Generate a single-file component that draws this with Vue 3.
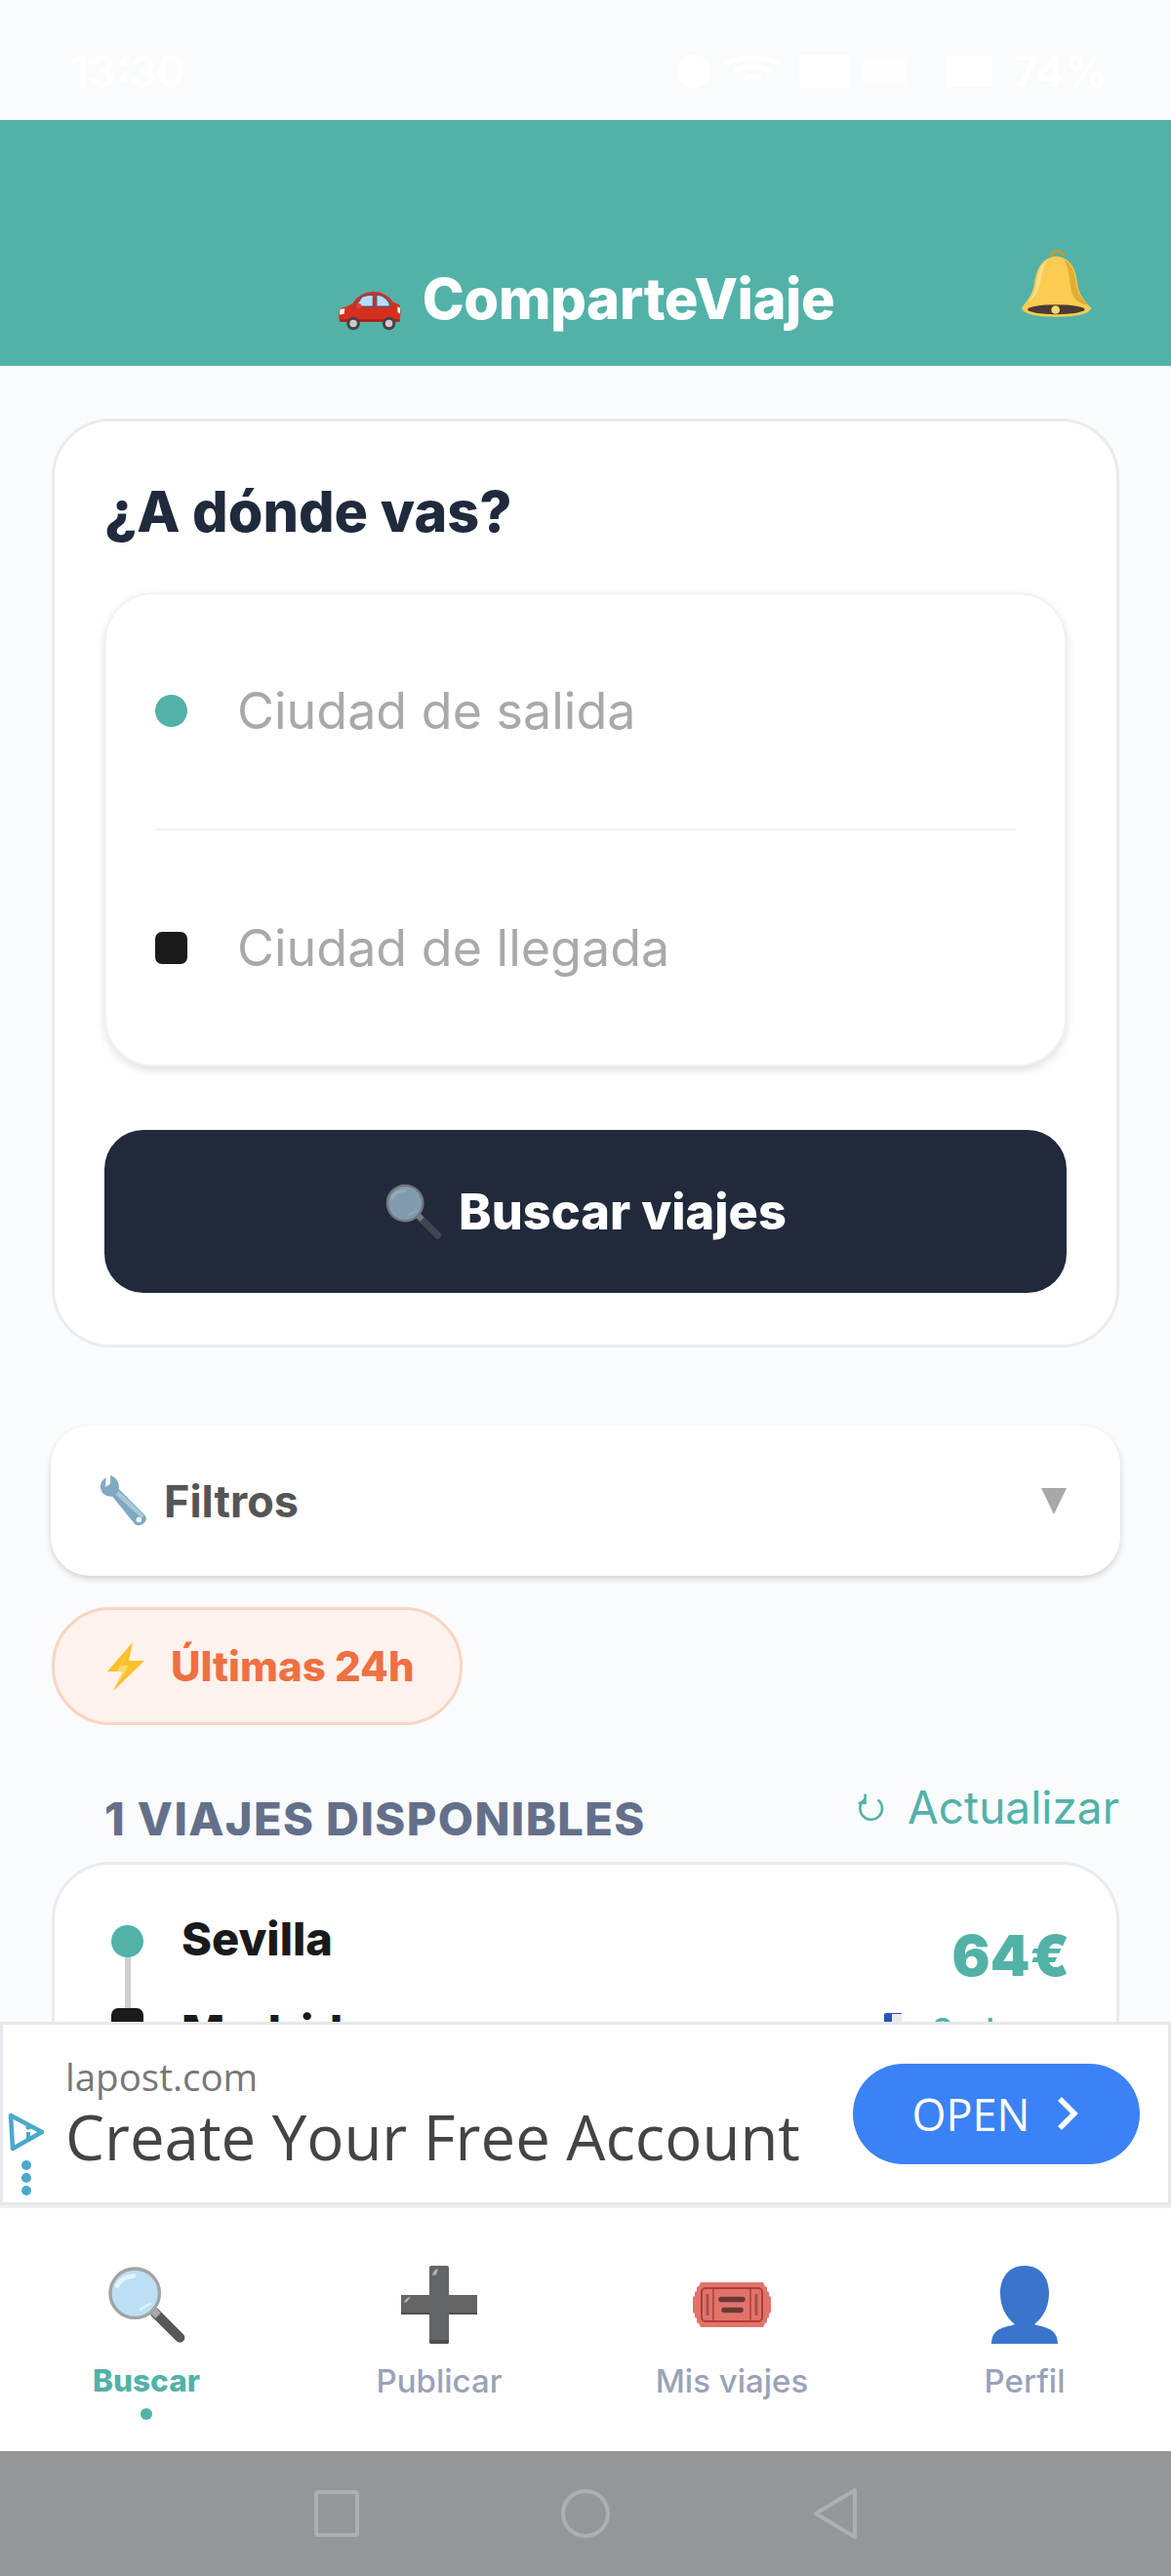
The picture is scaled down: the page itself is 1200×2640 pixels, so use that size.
<template>
  <div class="phone">
    <!-- barra de estado, casi invisible sobre el fondo claro -->
    <div class="status">
      <span class="clock">13:30</span>
      <div class="status-right">
        <svg width="235" height="40" viewBox="0 0 235 40">
          <circle cx="17" cy="20" r="17" fill="#fff" />
          <path d="M50 12q27-12 54 0M58 20q19-9 38 0M68 28q9-5 18 0" stroke="#fff" stroke-width="5" fill="none" />
          <rect x="125" y="3" width="52" height="34" rx="4" fill="#fff" />
          <rect x="190" y="6" width="45" height="28" fill="#fff" opacity=".6" />
        </svg>
        <svg class="st-batt" width="48" height="32" viewBox="0 0 48 32"><rect width="48" height="32" rx="3" fill="#fff" /></svg>
        <span class="batt">74%</span>
      </div>
    </div>

    <header class="app-header">
      <div></div>
      <h1 class="brand">
        <svg class="car" viewBox="50 170 200 130" width="68" height="44">
          <path d="M98 214Q118 180 160 178Q200 178 220 210L240 218Q246 242 240 268L60 270Q50 246 62 228Q84 224 98 214Z" fill="#d52f1f" />
          <path d="M60 262H240V270H60Z" fill="#a82216" />
          <path d="M106 224L126 194Q142 188 160 188V224ZM170 188Q192 188 208 210L212 224H170Z" fill="#b9dcf5" stroke="#5d5470" stroke-width="4" />
          <circle cx="117" cy="222" r="8" fill="#e8402c" />
          <path d="M60 232L74 230L72 246L58 248Z" fill="#fff" />
          <path d="M234 224L242 228L241 246L234 240Z" fill="#fff" />
          <circle cx="100" cy="275" r="20" fill="#4a4043" />
          <circle cx="100" cy="275" r="11" fill="#d0cccc" />
          <circle cx="208" cy="275" r="20" fill="#4a4043" />
          <circle cx="208" cy="275" r="11" fill="#d0cccc" />
        </svg>
        <span>ComparteViaje</span>
      </h1>
      <div class="bell-wrap">
        <svg viewBox="45 40 225 215" width="75" height="72">
          <path d="M140 66Q142 50 160 50Q178 50 180 66" stroke="#c49a30" stroke-width="9" fill="none" />
          <path d="M157 65C110 70 95 110 90 150C85 185 65 205 50 225Q60 252 157 252Q255 252 265 225C245 205 228 185 222 150C218 110 205 70 157 65Z" fill="#fbcb52" />
          <path d="M178 72C205 85 215 120 218 150C222 180 240 200 255 216C225 210 205 200 200 150C197 115 190 90 178 72Z" fill="#e3ac33" />
          <path d="M130 78C108 90 100 125 96 150C92 180 80 195 70 208C95 190 106 165 110 135C113 112 120 92 130 78Z" fill="#fde08e" />
          <ellipse cx="157" cy="229" rx="88" ry="15" fill="#4b3a32" />
          <circle cx="155" cy="230" r="13" fill="#f8d774" />
        </svg>
      </div>
    </header>

    <main class="content">
      <section class="search-card">
        <h2 class="search-title">¿A dónde vas?</h2>
        <div class="route-box">
          <div class="route-row with-line">
            <span class="dot"></span>
            <span class="placeholder">Ciudad de salida</span>
          </div>
          <div class="route-row">
            <span class="square"></span>
            <span class="placeholder">Ciudad de llegada</span>
          </div>
        </div>
        <button class="search-btn">
          <svg class="btn-mag" viewBox="85 60 250 250" width="60" height="60">
            <use href="#mag" />
          </svg>
          <span>Buscar viajes</span>
        </button>
      </section>

      <div class="filters">
        <div class="filters-left">
          <svg viewBox="0 0 50 50" width="54" height="54">
            <path d="M10 3C4 6 3 13 7 18C10 21 14 21 16 21L37 47C40 50 45 48 47 45C49 42 48 40 46 38L22 14C23 9 20 3 14 1L14 9L9 12Z" fill="#7fa9c0" />
            <path d="M22 16L46 39L44 42L19 19Z" fill="#a9c9da" />
            <circle cx="41" cy="43" r="2.5" fill="#fff" />
          </svg>
          <span>Filtros</span>
        </div>
        <svg viewBox="0 0 26 27" width="26" height="27"><path d="M0 0H26L13 27Z" fill="#a8a8a8" /></svg>
      </div>

      <button class="chip">
        <svg viewBox="0 0 42 50" width="42" height="50">
          <path d="M28 0L2 30H18L8 50L40 19H24Z" fill="#fbc02d" />
          <path d="M28 0L12 30H18L8 50L24 24H16Z" fill="#fdd96a" />
        </svg>
        <span>Últimas 24h</span>
      </button>

      <div class="section-head">
        <span class="section-title">1 VIAJES DISPONIBLES</span>
        <button class="refresh">
          <svg viewBox="0 0 26 26" width="28" height="28">
            <path d="M8 5.5A10.5 10.5 0 1 0 20 6" stroke="#52b2a8" stroke-width="2.4" fill="none" />
            <path d="M8 0.5V9H1.5" stroke="#52b2a8" stroke-width="2.4" fill="none" />
          </svg>
          <span>Actualizar</span>
        </button>
      </div>

      <article class="trip-card">
        <div class="trip-route">
          <div class="timeline">
            <span class="dot"></span>
            <span class="line"></span>
            <span class="square"></span>
          </div>
          <div class="cities">
            <div class="city">Sevilla</div>
            <div class="city">Madrid</div>
          </div>
        </div>
        <div class="trip-side">
          <div class="price">64€</div>
          <div class="seats">
            <svg viewBox="0 0 18 30" width="18" height="30"><path d="M0 2Q0 0 3 0H18V10H10V30H0Z" fill="#2a53b5" /><rect x="8" y="1" width="10" height="8" fill="#e6ebf2" /></svg>
            <span>2 plazas</span>
          </div>
        </div>
      </article>
    </main>

    <aside class="ad">
      <div class="ad-marks">
        <svg viewBox="0 0 38 40" width="38" height="40">
          <path d="M3 3L35 20L5 37Z" stroke="#4aa9cc" stroke-width="4.5" stroke-linejoin="round" fill="none" />
          <circle cx="21" cy="15" r="2.6" fill="#4aa9cc" />
          <path d="M21 20V30" stroke="#4aa9cc" stroke-width="4" />
        </svg>
        <span class="ad-dot"></span>
        <span class="ad-dot"></span>
        <span class="ad-dot"></span>
      </div>
      <div class="ad-text">
        <div class="ad-domain">lapost.com</div>
        <div class="ad-headline">Create Your Free Account</div>
      </div>
      <button class="ad-btn">
        <span>OPEN</span>
        <svg viewBox="0 0 26 36" width="26" height="36"><path d="M5 3L20 18L5 33" stroke="#fff" stroke-width="5.5" fill="none" /></svg>
      </button>
    </aside>

    <nav class="tabbar">
      <div v-for="tab in tabs" :key="tab.label" class="tab" :class="{ active: tab.active }">
        <div class="tab-icon">
          <svg v-if="tab.icon === 'search'" viewBox="85 60 250 250" width="83" height="83">
            <defs>
              <g id="mag">
                <path d="M235 208L312 285" stroke="#58585b" stroke-width="30" stroke-linecap="round" />
                <path d="M225 197L245 217" stroke="#a9a9a9" stroke-width="24" />
                <circle cx="173" cy="148" r="76" fill="#bcdff6" stroke="#a3a3a3" stroke-width="10" />
                <path d="M118 125Q135 95 170 95" stroke="#e4f3fc" stroke-width="14" fill="none" stroke-linecap="round" />
                <path d="M190 198L220 180" stroke="#dff0fb" stroke-width="8" stroke-linecap="round" />
              </g>
            </defs>
            <use href="#mag" />
          </svg>
          <svg v-else-if="tab.icon === 'plus'" viewBox="0 0 78 80" width="78" height="80">
            <path d="M29 2Q29 0 31 0H47Q49 0 49 2V30H78V50H49V78Q49 80 47 80H31Q29 80 29 78V50H0V30H29Z" fill="#636466" />
            <path d="M0 48H29V50H0ZM49 48H78V50H49ZM29 76H49V78Q49 80 47 80H31Q29 80 29 78Z" fill="#4e4f50" />
            <path d="M32 10Q33 4 38 3L36 9ZM3 38Q4 33 10 32L6 37Z" fill="#b5b5b7" />
          </svg>
          <svg v-else-if="tab.icon === 'ticket'" viewBox="0 0 80 46" width="80" height="46">
            <path d="M8 0H72L74 4L76 5V9L78 10V14L80 15V31L78 32V36L76 37V41L74 42L72 46H8L6 42L4 41V37L2 36V32L0 31V15L2 14V10L4 9V5L6 4Z" fill="#e2736a" />
            <rect x="9" y="6" width="62" height="34" rx="4" fill="none" stroke="#b13d37" stroke-width="2" />
            <path d="M21 6V40M59 6V40" stroke="#b13d37" stroke-width="1.5" />
            <path d="M15 12V34M65 12V34" stroke="#a4524c" stroke-width="3" />
            <path d="M29 17.5H51M32 28.5H49" stroke="#693a34" stroke-width="5.5" stroke-linecap="round" />
          </svg>
          <svg v-else viewBox="0 0 68 80" width="68" height="80">
            <path d="M34 0C15 0 9 16 9 28C9 42 15 53 24 60C18 63 0 62 0 80H68C68 62 50 63 44 60C53 53 59 42 59 28C59 16 53 0 34 0Z" fill="#3a74cb" />
          </svg>
        </div>
        <span class="tab-label">{{ tab.label }}</span>
        <span v-if="tab.active" class="tab-dot"></span>
      </div>
    </nav>

    <div class="sysnav">
      <svg viewBox="0 0 50 56" width="50" height="56"><rect x="4" y="6" width="42" height="44" rx="2" fill="none" stroke="#aeafb1" stroke-width="4" /></svg>
      <svg viewBox="0 0 50 56" width="50" height="56"><circle cx="25" cy="28" r="23" fill="none" stroke="#aeafb1" stroke-width="4" /></svg>
      <svg viewBox="0 0 50 56" width="50" height="56"><path d="M46 4V52L6 28Z" fill="none" stroke="#aeafb1" stroke-width="4" stroke-linejoin="round" /></svg>
    </div>
  </div>
</template>

<script setup>
const tabs = [
  { label: 'Buscar', icon: 'search', active: true },
  { label: 'Publicar', icon: 'plus', active: false },
  { label: 'Mis viajes', icon: 'ticket', active: false },
  { label: 'Perfil', icon: 'person', active: false }
]
</script>

<style scoped>
.phone {
  width: 1200px;
  height: 2640px;
  display: flex;
  flex-direction: column;
  overflow: hidden;
  background: #f9fbfd;
  font-family: 'Inter', 'Liberation Sans', sans-serif;
}

.status {
  height: 123px;
  flex: none;
  display: flex;
  justify-content: space-between;
  align-items: center;
  padding: 22px 65px 0 72px;
  color: #fff;
  font-size: 44px;
  font-weight: 600;
  box-sizing: border-box;
}

.status-right {
  display: flex;
  align-items: center;
}

.st-batt {
  margin: 0 22px 0 40px;
}

.app-header {
  height: 252px;
  flex: none;
  background: #52b2a8;
  display: grid;
  grid-template-columns: 1fr auto 1fr;
  align-items: end;
  box-sizing: border-box;
  padding-bottom: 34px;
}

.brand {
  margin: 0;
  display: flex;
  align-items: center;
  gap: 20px;
  color: #fff;
  font-size: 58px;
  font-weight: 800;
  line-height: 70px;
  letter-spacing: -0.5px;
}

.car {
  margin-top: 24px;
}

.bell-wrap {
  justify-self: end;
  padding: 0 80px 15px 0;
  line-height: 0;
}

.content {
  flex: 1;
  min-height: 0;
  overflow: hidden;
  padding: 54px 53px 0;
}

.search-card {
  background: #fff;
  border: 3px solid #e8ecf1;
  border-radius: 60px;
  padding: 58px 51px 53px;
}

.search-title {
  margin: 0 0 49px;
  font-size: 57.5px;
  line-height: 68px;
  font-weight: 800;
  color: #1f2a3d;
}

.route-box {
  border: 2px solid #f1f2f4;
  border-radius: 50px;
  padding: 0 50px;
  background: #fff;
  box-shadow: 0 4px 10px rgba(0, 0, 0, 0.12);
}

.route-row {
  height: 240px;
  display: flex;
  align-items: center;
  gap: 51px;
}

.route-row.with-line {
  height: 238px;
  padding-bottom: 2px;
  border-bottom: 2px solid #f0f1f3;
}

.dot {
  width: 33px;
  height: 33px;
  border-radius: 50%;
  background: #52b2a8;
  flex: none;
}

.square {
  width: 33px;
  height: 33px;
  border-radius: 7px;
  background: #1a1a1a;
  flex: none;
}

.placeholder {
  font-size: 52px;
  color: #a9a9a9;
}

.search-btn {
  margin-top: 65px;
  width: 100%;
  height: 167px;
  border: none;
  border-radius: 40px;
  background: #212a3b;
  color: #fff;
  font-family: inherit;
  font-size: 50.5px;
  font-weight: 800;
  display: flex;
  align-items: center;
  justify-content: center;
  gap: 16px;
}

.btn-mag {
  opacity: 0.62;
}

.filters {
  margin: 80px -1px 0;
  height: 154px;
  background: #fff;
  border-radius: 40px;
  box-shadow: 0 3px 6px rgba(0, 0, 0, 0.16);
  display: flex;
  align-items: center;
  justify-content: space-between;
  padding: 0 55px 0 46px;
}

.filters-left {
  display: flex;
  align-items: center;
  gap: 16px;
  font-size: 45px;
  font-weight: 700;
  color: #555;
}

.chip {
  margin-top: 32px;
  width: 421px;
  height: 121px;
  box-sizing: border-box;
  border: 3px solid #f8d5c2;
  border-radius: 60px;
  background: #fdf2ed;
  color: #ee7043;
  font-family: inherit;
  font-size: 42px;
  font-weight: 800;
  display: flex;
  align-items: center;
  padding: 0 0 0 52px;
  gap: 25px;
}

.section-head {
  margin-top: 50px;
  height: 80px;
  margin-bottom: 10px;
  display: flex;
  justify-content: space-between;
  align-items: flex-start;
  padding-left: 54px;
}

.section-title {
  margin-top: 12px;
  line-height: 68px;
  font-size: 47px;
  font-weight: 800;
  letter-spacing: 1.4px;
  color: #64708a;
}

.refresh {
  border: none;
  background: none;
  padding: 0;
  height: 68px;
  display: flex;
  align-items: center;
  gap: 24px;
  font-family: inherit;
  font-size: 46px;
  color: #52b2a8;
}

.trip-card {
  background: #fff;
  border: 3px solid #e8ecf1;
  border-radius: 60px;
  padding: 54px 48px 60px 58px;
  display: flex;
  justify-content: space-between;
}

.trip-route {
  display: flex;
  gap: 39px;
}

.timeline {
  display: flex;
  flex-direction: column;
  align-items: center;
  padding-top: 8px;
}

.line {
  width: 6px;
  height: 52px;
  background: #cfcfcf;
}

.cities {
  display: flex;
  flex-direction: column;
  gap: 39px;
  margin-top: -6px;
}

.city {
  font-size: 47px;
  line-height: 56px;
  font-weight: 800;
  color: #1a1a1a;
}

.trip-side {
  display: flex;
  flex-direction: column;
  align-items: flex-end;
}

.price {
  font-size: 58px;
  line-height: 76px;
  margin-top: 1px;
  font-weight: 900;
  color: #52b2a8;
}

.seats {
  margin: 17px -6px 0 0;
  display: flex;
  align-items: center;
  gap: 31px;
  font-size: 37px;
  font-weight: 500;
  color: #52b2a8;
}

.seats svg {
  margin-top: -8px;
}

.ad {
  height: 188px;
  flex: none;
  box-sizing: border-box;
  border: 3px solid #e5e7eb;
  background: #fff;
  display: flex;
  align-items: center;
  font-family: 'Open Sans', 'Liberation Sans', sans-serif;
  padding-right: 29px;
}

.ad-marks {
  align-self: flex-end;
  width: 38px;
  margin-left: 5px;
  padding-bottom: 7px;
  display: flex;
  flex-direction: column;
  align-items: center;
  gap: 3px;
  flex: none;
}

.ad-marks svg {
  margin-bottom: 6px;
}

.ad-dot {
  width: 10px;
  height: 10px;
  border-radius: 50%;
  background: #4aa9cc;
}

.ad-text {
  flex: 1;
  margin-left: 21px;
}

.ad-domain {
  padding-top: 8px;
  font-size: 38.5px;
  line-height: 40px;
  color: #777;
}

.ad-headline {
  font-size: 63.5px;
  line-height: 84px;
  color: #444;
}

.ad-btn {
  width: 294px;
  height: 103px;
  border: none;
  border-radius: 52px;
  background: #3b82f6;
  color: #fff;
  font-family: inherit;
  font-size: 45px;
  display: flex;
  align-items: center;
  justify-content: center;
  gap: 26px;
}

.tabbar {
  height: 252px;
  flex: none;
  box-sizing: border-box;
  border-top: 3px solid #eceef2;
  background: #fff;
  display: grid;
  grid-template-columns: repeat(4, 1fr);
  padding-top: 59px;
}

.tab {
  display: flex;
  flex-direction: column;
  align-items: center;
}

.tab-icon {
  height: 80px;
  display: flex;
  align-items: center;
  justify-content: center;
}

.tab-label {
  margin-top: 18px;
  line-height: 40px;
  font-size: 33px;
  font-weight: 500;
  color: #9aa2b8;
}

.tab.active .tab-label {
  font-size: 31.5px;
  font-weight: 800;
  color: #52b2a8;
}

.tab-dot {
  margin-top: 8px;
  width: 12px;
  height: 12px;
  border-radius: 50%;
  background: #52b2a8;
}

.sysnav {
  height: 128px;
  flex: none;
  background: #959698;
  display: flex;
  align-items: center;
  justify-content: center;
  gap: 205px;
}
</style>
